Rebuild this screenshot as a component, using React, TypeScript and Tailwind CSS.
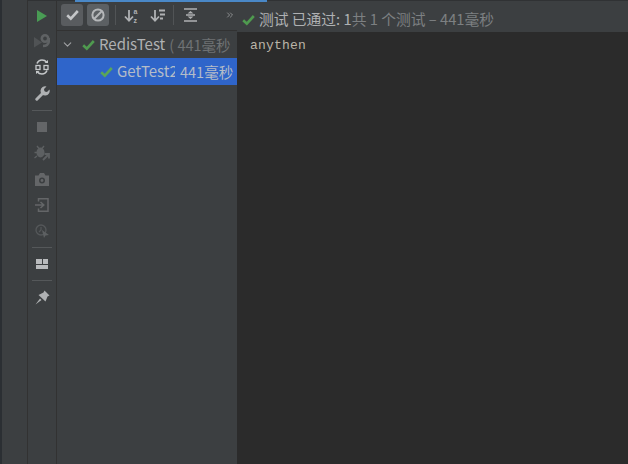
import { ChevronDown, ChevronsRight } from "lucide-react";

const cjk = "font-['Noto_Sans_CJK_SC','Noto_Sans',sans-serif]";

function Tick({ color = "#4f9a4f" }: { color?: string }) {
  return (
    <svg width="13" height="12" viewBox="0 0 13 12" className="shrink-0">
      <path d="M1.2 6.2 L4.8 9.6 L11.8 2" fill="none" stroke={color} strokeWidth="2.6" />
    </svg>
  );
}

function Cell({ children }: { children: React.ReactNode }) {
  return <div className="flex h-[26px] w-full items-center justify-center">{children}</div>;
}

function Sidebar() {
  return (
    <div className="flex w-[30px] shrink-0 flex-col items-center border-x border-[#323232] pt-[2px]">
      <Cell>
        <svg width="12" height="14" viewBox="0 0 12 14" className="mt-[2px]">
          <path d="M1 1 L11 7 L1 13 Z" fill="#499c54" />
        </svg>
      </Cell>
      <Cell>
        <svg width="16" height="14" viewBox="0 0 16 14">
          <path d="M0 3 L8 8.5 L0 13.5 Z" fill="#505355" />
          <circle cx="11" cy="4.5" r="3.2" fill="none" stroke="#5f6264" strokeWidth="2.6" />
          <path d="M14.7 4 V8 Q14 12 9 12" fill="none" stroke="#5f6264" strokeWidth="2.6" />
        </svg>
      </Cell>
      <Cell>
        <svg width="14" height="16" viewBox="0 0 14 16">
          <path d="M2 4.5 Q3.5 1 7 1 Q10 1 11.5 3 M12 11.5 Q10.5 15 7 15 Q4 15 2.5 13" fill="none" stroke="#c4c7c9" strokeWidth="1.6" />
          <path d="M9.5 4 H13 V1 Z M4.5 12 H1 V15 Z" fill="#c4c7c9" />
          <rect x="1" y="6.5" width="4" height="4" fill="none" stroke="#c4c7c9" strokeWidth="1.3" />
          <rect x="9" y="6.5" width="4" height="4" fill="none" stroke="#c4c7c9" strokeWidth="1.3" />
        </svg>
      </Cell>
      <Cell>
        <svg width="15" height="15" viewBox="0 0 15 15">
          <path d="M1.8 13.2 L8.5 6.5" stroke="#afb1b3" strokeWidth="3" strokeLinecap="round" />
          <path d="M14.5 3.5 A4.6 4.6 0 1 1 11.5 0.5 L9 3 L9.5 5.5 L12 6 Z" fill="#afb1b3" />
        </svg>
      </Cell>
      <div className="mt-[4px] mb-[3px] h-px w-5 bg-[#55585a]" />
      <Cell>
        <div className="h-[10px] w-[10px] bg-[#646668]" />
      </Cell>
      <Cell>
        <svg width="16" height="16" viewBox="0 0 16 16">
          <ellipse cx="6.5" cy="7.5" rx="4" ry="5" fill="#5d6062" />
          <path d="M3 1 L5 3.5 M10 1 L8 3.5 M0.5 7.5 H3 M0.5 13 L3 11" stroke="#5d6062" strokeWidth="1.4" />
          <path d="M9 15 L14 10 M10.5 9 H15 V13.5" fill="none" stroke="#5d6062" strokeWidth="1.8" />
        </svg>
      </Cell>
      <Cell>
        <svg width="14" height="13" viewBox="0 0 14 13">
          <path fillRule="evenodd" d="M0 2.5 H3.5 L5 0 H9 L10.5 2.5 H14 V13 H0 Z M7 4.5 A3 3 0 1 0 7 10.5 A3 3 0 1 0 7 4.5 Z" fill="#646668" />
          <circle cx="7" cy="7.5" r="1.4" fill="#646668" />
        </svg>
      </Cell>
      <Cell>
        <svg width="14" height="14" viewBox="0 0 14 14">
          <path d="M3.5 3.5 V0.8 H13 V13.2 H3.5 V10.5" fill="none" stroke="#646668" strokeWidth="1.5" />
          <path d="M0 7 H8 M5.5 4 L8.8 7 L5.5 10" fill="none" stroke="#646668" strokeWidth="1.5" />
        </svg>
      </Cell>
      <Cell>
        <svg width="14" height="14" viewBox="0 0 14 14">
          <circle cx="6" cy="6" r="5" fill="none" stroke="#55585a" strokeWidth="1.3" />
          <path d="M6 3 V6 L4 8" fill="none" stroke="#55585a" strokeWidth="1.2" />
          <path d="M7 6 L14 11 L10.5 11.5 L9 14 Z" fill="#5d6062" />
        </svg>
      </Cell>
      <div className="my-[3px] h-px w-5 bg-[#55585a]" />
      <Cell>
        <div className="grid h-[10px] w-[12px] grid-cols-2 grid-rows-[5px_4px] gap-x-[1px] gap-y-[1px]">
          <div className="bg-[#b9bbbd]" />
          <div className="bg-[#b9bbbd]" />
          <div className="col-span-2 bg-[#b9bbbd]" />
        </div>
      </Cell>
      <div className="my-[3px] h-px w-5 bg-[#55585a]" />
      <Cell>
        <svg width="15" height="15" viewBox="0 0 15 15">
          <path d="M0.5 14.5 L5 8.5 L6.5 10 Z" fill="#afb1b3" />
          <path d="M9.5 0.5 L14.5 5.5 L12.5 6.5 L10.5 11.5 L3.5 5 L8.5 2.5 Z" fill="#afb1b3" />
        </svg>
      </Cell>
    </div>
  );
}

function SortIcon({ alpha }: { alpha?: boolean }) {
  return (
    <svg width="15" height="15" viewBox="0 0 15 15" className="shrink-0 overflow-visible">
      <path d="M5 2 V12.5 M1 8.5 L5 12.8 L9 8.5" fill="none" stroke="#afb1b3" strokeWidth="1.8" />
      {alpha ? (
        <>
          <text x="9.5" y="6.2" fontSize="7" fontWeight="700" fill="#afb1b3" className="font-['Liberation_Sans']">a</text>
          <text x="9.5" y="14.6" fontSize="7" fontWeight="700" fill="#afb1b3" className="font-['Liberation_Sans']">z</text>
        </>
      ) : (
        <path d="M9 2.5 H15 M10 6.5 H15 M10 10.5 H13" stroke="#afb1b3" strokeWidth="1.8" />
      )}
    </svg>
  );
}

function Toolbar() {
  return (
    <div className="flex h-[31px] items-center border-b border-[#323232] pl-[4px]">
      <div className="flex h-[22px] w-[22px] items-center justify-center rounded-[3px] bg-[#595c5f]">
        <Tick color="#c4c6c8" />
      </div>
      <div className="ml-[4px] flex h-[22px] w-[22px] items-center justify-center rounded-[3px] bg-[#5c6063]">
        <svg width="14" height="14" viewBox="0 0 14 14">
          <circle cx="7" cy="7" r="5.6" fill="none" stroke="#b5b7b9" strokeWidth="2" />
          <path d="M3 11 L11 3" stroke="#b5b7b9" strokeWidth="2" />
        </svg>
      </div>
      <div className="ml-[6px] h-[20px] w-px bg-[#515456]" />
      <div className="ml-[8px]"><SortIcon alpha /></div>
      <div className="ml-[11px]"><SortIcon /></div>
      <div className="ml-[8px] h-[20px] w-px bg-[#515456]" />
      <svg width="13" height="14" viewBox="0 0 13 14" className="ml-[10px] shrink-0">
        <path d="M0 1 H13 M0 13 H13 M2 7 H11" stroke="#afb1b3" strokeWidth="1.6" />
        <path d="M6.5 3 L9.5 5.5 H3.5 Z M6.5 11 L9.5 8.5 H3.5 Z" fill="#afb1b3" />
      </svg>
      <ChevronsRight size={10} className="ml-[28px] shrink-0 text-[#9a9c9e]" />
    </div>
  );
}

function Tree() {
  return (
    <div className="flex w-[180px] shrink-0 flex-col text-[15px]">
      <Toolbar />
      <div className="flex h-[27px] items-center overflow-hidden">
        <ChevronDown size={13} className="ml-[4px] shrink-0 text-[#a0a2a4]" />
        <div className="ml-[8px]"><Tick /></div>
        <span className="ml-[4px] whitespace-nowrap text-[#afb1b3]">RedisTest</span>
        <span className="ml-[4px] whitespace-nowrap text-[14.5px] text-[#6f7274]">( 441毫秒</span>
      </div>
      <div className="flex h-[27px] items-center overflow-hidden bg-[#2f65ca]">
        <div className="ml-[43px]"><Tick color="#5aa65a" /></div>
        <span className="ml-[4px] w-[58px] shrink-0 overflow-hidden whitespace-nowrap text-[#b4bcc8]">GetTest2</span>
        <span className="ml-[5px] whitespace-nowrap text-[14.5px] text-[#b4bcc8]">441毫秒</span>
      </div>
    </div>
  );
}

export default function App() {
  return (
    <div className={`relative flex h-[464px] w-[628px] overflow-hidden bg-[#3c3f41] ${cjk}`}>
      <div className="w-[27px] shrink-0 border-l-2 border-[#2b2f33]" />
      <Sidebar />
      <Tree />
      <div className="flex min-w-0 flex-1 flex-col">
        <div className="flex h-[32px] items-center whitespace-nowrap pl-[5px] pt-[7px] text-[14.75px]">
          <Tick />
          <span className="ml-[4px] text-[#afb1b3]">测试 已通过: 1</span>
          <span className="text-[#7d8082]">共 1 个测试 – 441毫秒</span>
        </div>
        <div className="flex-1 bg-[#2b2b2b] pl-[13px] pt-[6px] font-['Liberation_Mono','DejaVu_Sans_Mono',monospace] text-[13px] leading-[16px] tracking-[0.2px] text-[#bbb5a8]">
          anythen
        </div>
      </div>
      <div className="absolute top-0 left-[28px] h-px w-[600px] bg-[#303234]" />
      <div className="absolute top-0 left-[75px] h-[2px] w-[192px] bg-[#4a88c7]" />
    </div>
  );
}
